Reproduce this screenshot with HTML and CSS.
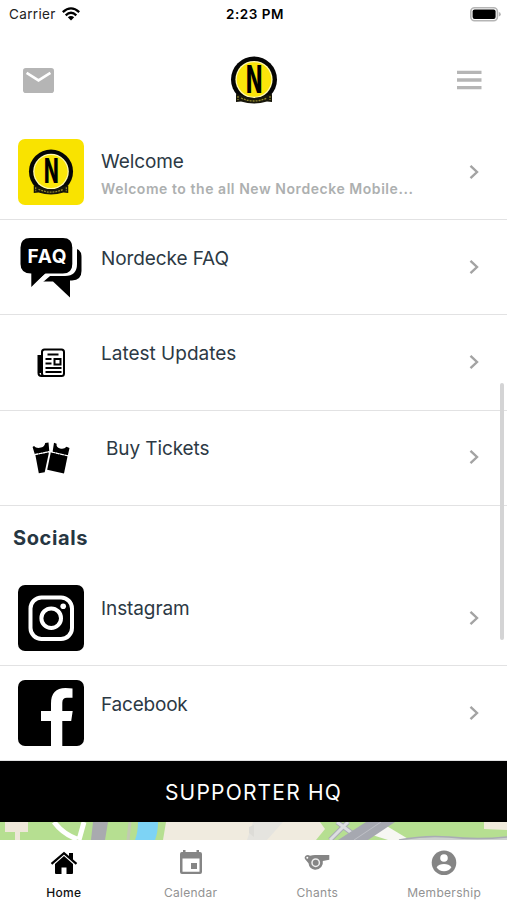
FILE: index.html
```html
<!DOCTYPE html>
<html lang="en">
<head>
    <meta charset="utf-8">
    <title>Nordecke</title>
    <link rel="stylesheet" href="styles.css">
</head>
<body>
    <svg class="defs" width="0" height="0">
        <symbol id="crest" viewBox="0 0 48 48">
            <circle cx="24" cy="23.5" r="23" fill="#050505"/>
            <circle cx="24" cy="23.5" r="18.600" fill="#fff8ae"/>
            <circle cx="24" cy="23.500" r="17.300" fill="#fbe50a"/>
            <path d="M6 38l5 1q13 6 26 0l5-1v8l-5-.5q-13 4-26 0L6 46z" fill="#17160a"/>
            <path d="M8 40v4M11 42q13 6 26 0M40 40v4" fill="none" stroke="#91872b" stroke-width="1.3" stroke-dasharray="2 1"/>
        </symbol>
        <symbol id="chevron" viewBox="0 0 10 16">
            <path d="M1.500 1.800L8 8l-6.500 6.200" fill="none" stroke="#a3a3a3" stroke-width="2.400"/>
        </symbol>
    </svg>

    <div class="app">
        <div class="status">
            <div class="carrier">
                <span>Carrier</span>
                <svg width="18" height="14" viewBox="0 0 18 14">
                    <g fill="none" stroke="#000" stroke-width="2.300">
                        <path d="M.8 5.200Q9-2.400 17.200 5.200"/>
                        <path d="M3.700 8.300Q9 3.300 14.300 8.300"/>
                    </g>
                    <path d="M5.800 10.200Q9 7.600 12.200 10.200L9 13.600z"/>
                </svg>
            </div>
            <div class="time">2:23 PM</div>
            <div class="battery">
                <svg width="31" height="15" viewBox="0 0 31 15">
                    <rect x=".8" y=".8" width="26.600" height="13" rx="3.800" fill="#fff" stroke="#b5b5b5" stroke-width="1.600"/>
                    <rect x="2.600" y="2.500" width="23" height="9.600" rx="2"/>
                    <path d="M28.800 5q2 .6 2 2.300t-2 2.300z" fill="#b5b5b5"/>
                </svg>
            </div>
        </div>

        <div class="navbar">
            <svg width="31" height="25" viewBox="0 0 31 25">
                <rect width="31" height="25" rx="2.800" fill="#b5b5b5"/>
                <path d="M3.600 4.800L15.500 12.400 27.400 4.800" fill="none" stroke="#fff" stroke-width="2.600"/>
            </svg>
            <svg class="logo" width="48" height="48" viewBox="0 0 48 48">
                <use href="#crest" width="48" height="48"/>
                <text class="crest-n" transform="translate(24.2 37) scale(.56 1)" text-anchor="middle">N</text>
            </svg>
            <svg width="25" height="20" viewBox="0 0 25 20">
                <path d="M0 2.300h24.500M0 10h24.500M0 17.700h24.500" stroke="#b5b5b5" stroke-width="3.300"/>
            </svg>
        </div>

        <div class="list">
            <div class="row">
                <div class="thumb yellow">
                    <svg width="46" height="46" viewBox="0 0 48 48">
                        <use href="#crest" width="48" height="48"/>
                        <text class="crest-n small" transform="translate(24.2 35.500) scale(.57 1)" text-anchor="middle">N</text>
                    </svg>
                </div>
                <div class="info">
                    <div class="title t-welcome">Welcome</div>
                    <div class="subtitle">Welcome to the all New Nordecke Mobile...</div>
                </div>
                <svg class="chevron"><use href="#chevron"/></svg>
            </div>
            <div class="row">
                <div class="thumb">
                    <svg width="66" height="66" viewBox="0 0 66 66">
                        <path d="M20 13h34q9.500 0 9.500 9v14q0 9-9.500 9.500H52V62.500L35 46.500H22z"/>
                        <path d="M12 3h35q9.500 0 9.500 9.500V29q0 9.500-9.500 9.500H31L13 54V38.500Q2.500 38.500 2.500 29V12.500Q2.500 3 12 3z" stroke="#fff" stroke-width="5"/>
                        <path d="M12 3h33q9.300 0 9.300 9.500V29q0 9.500-9.500 9.500H27L13.300 52V38.500Q2.500 38.500 2.500 29V12.500Q2.500 3 12 3z"/>
                        <text class="faq" x="29" y="27.500" text-anchor="middle" textLength="39">FAQ</text>
                    </svg>
                </div>
                <div class="info"><div class="title t-faq">Nordecke FAQ</div></div>
                <svg class="chevron"><use href="#chevron"/></svg>
            </div>
            <div class="row">
                <div class="thumb">
                    <svg width="28" height="30" viewBox="0 0 28 30">
                        <g fill="none" stroke="#000" stroke-width="2">
                            <rect x="5" y="1.500" width="22" height="26.500" rx="2.500"/>
                            <path d="M5 8H1.500v17q0 3 3 3h4M3.300 9v16"/>
                            <path d="M10.500 6.500h11M8.500 11h6M8.500 15.500h6M8.500 20h16M8.500 24h16"/>
                            <rect x="17.500" y="11" width="6" height="5.500"/>
                        </g>
                    </svg>
                </div>
                <div class="info"><div class="title t-updates">Latest Updates</div></div>
                <svg class="chevron"><use href="#chevron"/></svg>
            </div>
            <div class="row">
                <div class="thumb">
                    <svg width="38" height="32" viewBox="0 0 38 32">
                        <path d="M.6 5L2 4Q4.500 7 9 5.600 12.800 4.500 13.200 1L16.500.4 17.300 9.300 2.800 12.200z"/>
                        <path d="M22 .8l2.600 1Q24 5.500 28 6.500q4 1.200 6.500-1.800l3 1.200L35.800 13.400 20.600 9.700z"/>
                        <path d="M3.400 13L17 10.300 12.700 30.200 6.800 31.200z"/>
                        <path d="M18.800 10.300L35.600 14 32 31.500 15.200 27.800z"/>
                        <path d="M2.500 12.600L17.500 9.600M19.500 10L36 13.800" stroke="#fff" stroke-width="1.200" stroke-dasharray="3.500 1"/>
                    </svg>
                </div>
                <div class="info"><div class="title t-tickets">Buy Tickets</div></div>
                <svg class="chevron"><use href="#chevron"/></svg>
            </div>
            <h2 class="section">Socials</h2>
            <div class="row">
                <div class="thumb black">
                    <svg width="66" height="66" viewBox="0 0 66 66">
                        <g fill="none" stroke="#fff" stroke-width="4">
                            <rect x="12.500" y="12.500" width="41.500" height="41.500" rx="11"/>
                            <circle cx="33.200" cy="33.200" r="9.800"/>
                        </g>
                        <circle cx="45.200" cy="21.300" r="2.800" fill="#fff"/>
                    </svg>
                </div>
                <div class="info"><div class="title t-instagram">Instagram</div></div>
                <svg class="chevron"><use href="#chevron"/></svg>
            </div>
            <div class="row">
                <div class="thumb black">
                    <svg width="66" height="66" viewBox="0 0 66 66">
                        <path d="M33 66V41H23V31h10v-7.500Q33 8 47.500 8q4 0 7 .5v9.300h-5.500q-4.700 0-4.700 5V31h10.400l-1.500 10h-8.900v25z" fill="#fff"/>
                    </svg>
                </div>
                <div class="info"><div class="title t-facebook">Facebook</div></div>
                <svg class="chevron"><use href="#chevron"/></svg>
            </div>
            <div class="scrollbar"></div>
        </div>

        <div class="banner"><span>SUPPORTER HQ</span></div>

        <svg class="map" width="507" height="18" viewBox="0 0 507 18">
            <rect width="507" height="18" fill="#b6df91"/>
            <path d="M5 0h23v10h-8v8h-5v-8H5z" fill="#eee7d9"/>
            <path d="M54 0q9 12 23 17M84 0l-5 18" fill="none" stroke="#fff" stroke-width="5"/>
            <path d="M93 0h15l-3 18H91z" fill="#a9aaaf"/>
            <path d="M130 0l-2 18" stroke="#c1cbb1" stroke-width="3"/>
            <path d="M138 0h20q0 10-3 18h-20q3-8 3-18z" fill="#7dd3f5"/>
            <path d="M166 0h154l5 7-9 11H163z" fill="#f0ebdf"/>
            <path d="M253 0h30l-16 18h-20z" fill="#e5e4df"/>
            <path d="M249 5l5-2v12l-5-4z" fill="#dddcd7"/>
            <path d="M370 6l10-6 30 18h-22l-22-7z" fill="#f7f7f3"/>
            <path d="M337 0l24 18M348 0l-18 18" stroke="#aaadb6" stroke-width="5"/>
            <path d="M337 0l24 18M348 0l-18 18" stroke="#dcdee1" stroke-width="3"/>
            <path d="M366 0h29l-27 18h-30z" fill="#a6a8b0"/>
            <path d="M381 0l-27 18" stroke="#bfc0c6"/>
            <path d="M399 18q26-5 50-3 28 3 58 0v3z" fill="#cdd1cf"/>
            <path d="M399 18q26-5 50-3 28 3 58 0" fill="none" stroke="#a9acb4" stroke-width="1.500"/>
            <path d="M484 0h23v8l-23-1z" fill="#f0ebdc"/>
        </svg>

        <div class="tabs">
            <div class="tab active">
                <svg width="28" height="26" viewBox="0 0 28 26">
                    <path d="M5 14l9-8 9 8v9q0 1-1 1h-5.500v-6.500h-5V24H6q-1 0-1-1z"/>
                    <path d="M1.500 13.800L14 3.200l12.500 10.600" fill="none" stroke="#000" stroke-width="2.200"/>
                    <path d="M19 3h4v8l-4-3.500z"/>
                </svg>
                <span>Home</span>
            </div>
            <div class="tab">
                <svg width="28" height="26" viewBox="0 0 28 26">
                    <path fill-rule="evenodd" d="M5.500 2H4.800Q3 2 3 4v18q0 2 2 2h18q2 0 2-2V4q0-2-2-2h-1V-.5h-2.500V2h-11V-.5H6V2zM5.500 8.500h17v13.200h-17z"/>
                    <path d="M14 13h6v6h-6z"/>
                </svg>
                <span>Calendar</span>
            </div>
            <div class="tab">
                <svg width="28" height="26" viewBox="0 0 28 26">
                    <path d="M3 5.500Q5 4.600 7 5.800q3-1 6-.8h13.300v4.700l-6.500 1.300q.6 3.500-1.500 6-2.600 3-6.500 2.700-5.500-.6-6.300-6.500L2.600 9.800Q.5 7.500 3 5.500z"/>
                    <circle cx="12.700" cy="12.700" r="3.700" fill="none" stroke="#eee" stroke-width="1.500"/>
                    <circle cx="4.300" cy="7.700" r="1" fill="#fff"/>
                </svg>
                <span>Chants</span>
            </div>
            <div class="tab">
                <svg width="28" height="26" viewBox="0 0 28 26">
                    <circle cx="14" cy="12.700" r="12.300"/>
                    <circle cx="14" cy="8" r="3.800" fill="#fff"/>
                    <path d="M6.600 17.300Q9 14 14 14t7.400 3.300Q19 21.300 14 21.300t-7.400-4z" fill="#fff"/>
                </svg>
                <span>Membership</span>
            </div>
        </div>
    </div>
</body>
</html>
```
FILE: styles.css
```css
* {
    box-sizing: border-box;
}

body {
    margin: 0;
    background-color: #fff;
    font-family: Inter, "Liberation Sans", sans-serif;
    color: #000;
}

svg {
    display: block;
    flex: none;
}

.defs {
    position: absolute;
}

.app {
    width: 507px;
    height: 900px;
    display: flex;
    flex-direction: column;
    overflow: hidden;
}

.status {
    height: 28px;
    padding: 0 6px 0 9px;
    display: grid;
    grid-template-columns: 1fr auto 1fr;
    align-items: center;
    font-size: 13px;
}

.carrier {
    display: flex;
    align-items: center;
    gap: 6px;
    color: #222;
    font-size: 13.5px;
    letter-spacing: 0.35px;
}

.time {
    font-size: 13.5px;
    font-weight: 600;
    letter-spacing: 0.5px;
}

.battery {
    display: flex;
    justify-content: flex-end;
}

.navbar {
    height: 97px;
    padding: 7px 25px 0 23px;
    display: flex;
    align-items: center;
    justify-content: space-between;
}

.logo {
    margin-right: 4px;
}

.crest-n {
    font-size: 38px;
    font-weight: 800;
}

.small {
    font-size: 35px;
}

.list {
    height: 636px;
    position: relative;
}

.row {
    height: 95.2px;
    padding: 14.4px 28px 0 18px;
    display: flex;
    align-items: flex-start;
    border-bottom: 1px solid #e2e2e3;
}

.thumb {
    width: 66px;
    height: 66px;
    margin-right: 17px;
    flex: none;
    display: flex;
    align-items: center;
    justify-content: center;
    border-radius: 7px;
    overflow: hidden;
}

.yellow {
    background-color: #f9e300;
}

.black {
    background-color: #000;
}

.faq {
    fill: #fff;
    font-size: 19px;
    font-weight: 700;
}

.info {
    flex: 1;
    padding-top: 12.2px;
}

.title {
    font-size: 19px;
    line-height: 24px;
    color: #2c3944;
}

.t-welcome,
.t-faq,
.t-instagram {
    letter-spacing: -0.1px;
}

.t-welcome {
    margin-top: -1.4px;
}

.t-tickets {
    padding-left: 5px;
    letter-spacing: -0.1px;
}

.t-facebook {
    letter-spacing: -0.2px;
}

.subtitle {
    margin-top: 6px;
    font-size: 14px;
    line-height: 18px;
    font-weight: 600;
    letter-spacing: 0.55px;
    color: #adb0b0;
    white-space: nowrap;
}

.chevron {
    width: 10px;
    height: 16px;
    margin-top: 24.5px;
}

.section {
    height: 65px;
    margin: 0;
    padding: 19.6px 13px 0;
    font-size: 20px;
    line-height: 26px;
    font-weight: 700;
    letter-spacing: 0.6px;
    color: #263642;
}

.scrollbar {
    position: absolute;
    top: 258px;
    right: 3px;
    width: 4px;
    height: 257px;
    border-radius: 2px;
    background-color: #d4d4d5;
}

.banner {
    height: 61px;
    padding-top: 1px;
    display: flex;
    align-items: center;
    justify-content: center;
    background-color: #000;
    color: #fff;
    font-size: 21px;
    letter-spacing: 1.2px;
}

.tabs {
    height: 60px;
    display: flex;
    background-color: #fff;
}

.tab {
    flex: 1;
    padding: 10px 0 0 1px;
    display: flex;
    flex-direction: column;
    align-items: center;
    gap: 9px;
    font-size: 12px;
    line-height: 16px;
    letter-spacing: 0.3px;
    color: #929292;
    fill: #858585;
}

.active {
    color: #111;
    fill: #000;
    font-weight: 500;
}
```
